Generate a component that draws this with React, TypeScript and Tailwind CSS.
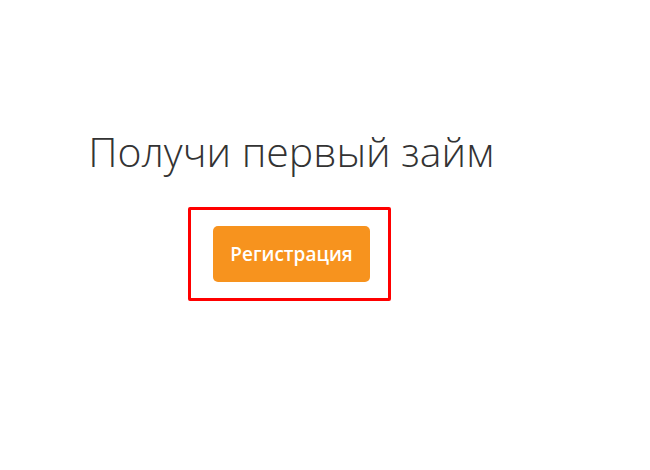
import React from "react";

export default function App() {
  return (
    <div className="w-[650px] h-[470px] bg-white" style={{ fontFamily: '"Open Sans", "Noto Sans", sans-serif' }}>
      <div className="w-[582px] pt-[123px] flex flex-col items-center">
        <h1 className="text-[41px] leading-[56px] font-light text-[#333333]">Получи первый займ</h1>
        <div className="mt-[28px] ml-[-3px] border-[3px] border-[#ff0000] rounded-[2px] pl-[22px] pr-[18px] pt-[16px] pb-[16px]">
          <button className="w-[157px] h-[56px] rounded-[5px] bg-[#f7931e] text-white text-[19px] font-semibold">
            Регистрация
          </button>
        </div>
      </div>
    </div>
  );
}
